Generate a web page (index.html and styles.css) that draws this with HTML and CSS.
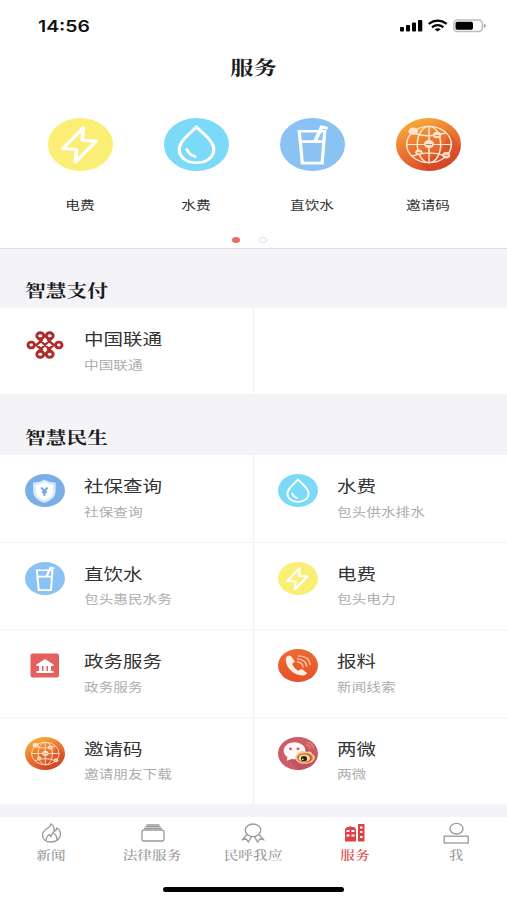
FILE: index.html
```html
<!DOCTYPE html>
<html lang="zh-CN">
<head>
<meta charset="utf-8">
<title>服务</title>
<link rel="stylesheet" href="styles.css">
</head>
<body>
<svg class="defs" aria-hidden="true">
  <defs>
    <linearGradient id="amber" x1=".2" y1="0" x2=".7" y2="1"><stop offset="0" stop-color="#f7b23c"/><stop offset=".5" stop-color="#ea7430"/><stop offset="1" stop-color="#d9432a"/></linearGradient>
    <linearGradient id="orange" x1="0" y1="0" x2="0" y2="1"><stop offset="0" stop-color="#ec6a35"/><stop offset="1" stop-color="#e65326"/></linearGradient>
  </defs>
  <symbol id="bolt" viewBox="0 0 64 64" preserveAspectRatio="none"><circle cx="32" cy="32" r="32" fill="#fbee74"/><path d="M34.500 12L14.500 37L28 38L27 53L47.500 28L34 27Z" fill="none" stroke="#fff" stroke-width="3.800" stroke-linejoin="round"/></symbol>
  <symbol id="drop" viewBox="0 0 64 64" preserveAspectRatio="none"><circle cx="32" cy="32" r="32" fill="#7bdaf8"/><path d="M32 10.500C28 17 15 27 15 38C15 48 23 54 32 54S49 48 49 38C49 27 36 17 32 10.500Z" fill="none" stroke="#fff" stroke-width="3.200" stroke-linejoin="round"/><path d="M22.500 38Q24.500 44.500 30.500 46.500" fill="none" stroke="#fff" stroke-width="3" stroke-linecap="round"/></symbol>
  <symbol id="cup" viewBox="0 0 64 64" preserveAspectRatio="none"><circle cx="32" cy="32" r="32" fill="#8ac3f3"/><path d="M19 16H44L41.500 54.500H22Z M20 28.500H43" fill="none" stroke="#fff" stroke-width="3.200"/><path d="M34.500 28L41 11L47 12.500" fill="none" stroke="#fff" stroke-width="3.600"/></symbol>
  <symbol id="globe" viewBox="0 0 64 64" preserveAspectRatio="none"><circle cx="32" cy="32" r="32" fill="url(#amber)"/><path d="M50 15L64 35C62 51 49 64 32 64L20 52Q51 48 50 15Z" fill="#c43d29" opacity=".25"/><g fill="none" stroke="#ffe8cf" stroke-width="1.500"><circle cx="32.500" cy="32" r="22"/><ellipse cx="32.500" cy="32" rx="11.500" ry="22"/><path d="M10.500 32H54.500M32.500 10V54M16 18Q32 25 49 18M16 46Q32 38 49 46"/></g><g fill="#ffe4cb"><ellipse cx="17" cy="16" rx="4.700" ry="4.400"/><circle cx="40.500" cy="20.500" r="4"/><circle cx="32.500" cy="31.500" r="5"/><circle cx="22.500" cy="41.500" r="3.500"/><circle cx="49.500" cy="45" r="3.800"/></g><path d="M29.500 32H35.500M38.500 21H42.500M20.500 42H24.500M47.500 45H51.500" stroke="#dd7340"/></symbol>
  <symbol id="shield" viewBox="0 0 64 64" preserveAspectRatio="none"><circle cx="32" cy="32" r="32" fill="#79afe6"/><path d="M31 10.500Q38 16 49 16.500V34Q49 49 31 56Q13 49 13 34V16.500Q24 16 31 10.500Z" fill="#d6e8fa"/><path d="M31 16Q37 20 45 20.500V34Q45 45 31 51Q17 45 17 34V20.500Q25 20 31 16Z" fill="#fff"/><path d="M26 26L31 33L36 26M31 32V42M27 35H35" fill="none" stroke="#69a5e0" stroke-width="3.400"/></symbol>
  <symbol id="phone" viewBox="0 0 64 64" preserveAspectRatio="none"><circle cx="32" cy="32" r="32" fill="url(#orange)"/><path d="M17 13Q12 14 12.500 22C13 38 26 51 39 51.500Q46 51 46 46L38 39L32 42Q25 37 22.500 29L27 24L21 14Q19 12 17 13Z" fill="#fff0e7"/><path d="M31 25Q39 26 40 35M31 19Q44 20 46 33M33 13.500Q50 14 51.500 30" fill="none" stroke="#ffc7ad" stroke-width="2.400" stroke-linecap="round"/></symbol>
  <symbol id="social" viewBox="0 0 64 64" preserveAspectRatio="none"><circle cx="32" cy="32" r="32" fill="#cd5c68"/><path d="M44 22L63 36Q60 61 33 64L18 45Z" fill="#ad4657" opacity=".45"/><path d="M26 10C16 10 9 18 9 27Q9 34 15 39L14 46L22 42.500C36 45 44 37 44 27C44 17 36 10 26 10Z" fill="#fff7f7"/><circle cx="20" cy="23" r="2.500" fill="#d1606d"/><circle cx="32" cy="23" r="2.500" fill="#d1606d"/><path d="M28 39C30 29 38 24 44 29C51 26 56 30 54 33Q60 35 59 40C58 48 50 52 42 52C33 52 27 46 28 39Z" fill="#f4ce8e"/><ellipse cx="43" cy="40.500" rx="12.500" ry="9" fill="#d65b32"/><ellipse cx="42" cy="41" rx="9" ry="7" fill="#f7dfad"/><circle cx="41.500" cy="42" r="5" fill="#29231c"/><circle cx="39.500" cy="43" r="1.500" fill="#fff"/><path d="M45 10Q56 11 57 22M45 15Q51 16 52 21" fill="none" stroke="#df9254" stroke-width="2"/></symbol>
</svg>

<main class="screen">
  <header class="status">
    <time class="clock">14:56</time>
    <svg class="signals" viewBox="0 0 88 16">
      <g><rect x="1" y="8" width="4" height="4.500" rx="1"/><rect x="7" y="6" width="4" height="6.500" rx="1"/><rect x="13" y="3.500" width="4" height="9" rx="1"/><rect x="19" y="1" width="4.300" height="11.500" rx="1"/></g>
      <g fill="none" stroke="#000" stroke-width="2.300"><path d="M29.700 4.900Q38.700 -1.500 47.700 4.900M33 8.200Q38.700 4.200 44.400 8.200"/></g><path d="M35.700 10.200Q38.700 8.400 41.700 10.200L38.700 12.600Z"/>
      <rect x="54.800" y="1" width="28.500" height="11.500" rx="3.500" fill="#fff" stroke="#bdbdbd" stroke-width="1.500"/><rect x="56.500" y="2.700" width="17.500" height="8.100" rx="1.700"/><path d="M84.700 5Q87 5.300 87 6.900T84.700 8.700Z" fill="#aaa"/>
    </svg>
  </header>
  <h1 class="page-title"><span class="wide">服务</span></h1>

  <nav class="shortcuts">
    <a class="shortcut"><svg class="shortcut-icon"><use href="#bolt"/></svg><span class="wide">电费</span></a>
    <a class="shortcut"><svg class="shortcut-icon"><use href="#drop"/></svg><span class="wide">水费</span></a>
    <a class="shortcut"><svg class="shortcut-icon"><use href="#cup"/></svg><span class="wide">直饮水</span></a>
    <a class="shortcut"><svg class="shortcut-icon"><use href="#globe"/></svg><span class="wide">邀请码</span></a>
  </nav>
  <div class="pager"><i class="dot active"></i><i class="dot"></i></div>

  <h2 class="section-title first"><span class="wide">智慧支付</span></h2>
  <section class="services">
    <a class="service">
      <svg class="service-icon" viewBox="0 0 40 33"><g fill="none" stroke="#b02c2a" stroke-width="2.900"><ellipse cx="15.300" cy="8.700" rx="3.500" ry="3"/><ellipse cx="24.700" cy="8.700" rx="3.500" ry="3"/><ellipse cx="15.300" cy="27.300" rx="3.500" ry="3"/><ellipse cx="24.700" cy="27.300" rx="3.500" ry="3"/><ellipse cx="6.200" cy="18" rx="3.200" ry="2.900"/><ellipse cx="33.800" cy="18" rx="3.200" ry="2.900"/><path d="M12.800 11L27.200 25M27.200 11L12.800 25M9 18H11.500L17.500 23.500M9 18H11.500L17.500 12.500M31 18H28.500L22.500 23.500M31 18H28.500L22.500 12.500" stroke-width="2.400"/></g></svg>
      <div class="copy"><span class="wide name">中国联通</span><span class="wide detail">中国联通</span></div>
    </a>
    <div class="service"></div>
  </section>

  <h2 class="section-title"><span class="wide">智慧民生</span></h2>
  <section class="services">
    <a class="service"><svg class="service-icon"><use href="#shield"/></svg><div class="copy"><span class="wide name">社保查询</span><span class="wide detail">社保查询</span></div></a>
    <a class="service"><svg class="service-icon"><use href="#drop"/></svg><div class="copy"><span class="wide name">水费</span><span class="wide detail">包头供水排水</span></div></a>
    <a class="service"><svg class="service-icon"><use href="#cup"/></svg><div class="copy"><span class="wide name">直饮水</span><span class="wide detail">包头惠民水务</span></div></a>
    <a class="service"><svg class="service-icon"><use href="#bolt"/></svg><div class="copy"><span class="wide name">电费</span><span class="wide detail">包头电力</span></div></a>
    <a class="service"><svg class="service-icon" viewBox="0 0 40 33"><rect x="5.500" y="4.500" width="28.500" height="24" rx="2" fill="#e4605f"/><path d="M11.500 15.500L20 10L28.500 15.500V17H11.500ZM14 17H17V22.500H14ZM18.500 17H21.500V22.500H18.500ZM23 17H26V22.500H23ZM11.500 22H28.500V24H11.500Z" fill="#fff"/></svg><div class="copy"><span class="wide name">政务服务</span><span class="wide detail">政务服务</span></div></a>
    <a class="service"><svg class="service-icon"><use href="#phone"/></svg><div class="copy"><span class="wide name">报料</span><span class="wide detail">新闻线索</span></div></a>
    <a class="service"><svg class="service-icon"><use href="#globe"/></svg><div class="copy"><span class="wide name">邀请码</span><span class="wide detail">邀请朋友下载</span></div></a>
    <a class="service"><svg class="service-icon"><use href="#social"/></svg><div class="copy"><span class="wide name">两微</span><span class="wide detail">两微</span></div></a>
  </section>

  <footer class="bottom">
    <nav class="tabs">
      <a class="tab"><svg viewBox="0 0 26 22"><path d="M13 2C13 6 4.500 7 4.500 13C4.500 17.500 8 20 13 20S22.500 17 22.500 12Q22.500 8 19 6Q18.500 8.500 16 9.500Q17 4 13 2ZM8 18Q9 13.500 11.500 12.500L13 14.500L15 10.500Q19 13 19 18"/></svg><span class="wide">新闻</span></a>
      <a class="tab"><svg viewBox="0 0 26 22"><path d="M5 8H22Q25 8 25 10V17Q25 19 23 19H5Q3 19 3 17V10Q3 8 5 8ZM5 6.400H23M6.500 4.700H21.500M7.500 3H20.500"/></svg><span class="wide">法律服务</span></a>
      <a class="tab"><svg viewBox="0 0 26 22"><ellipse cx="13" cy="8.300" rx="7.700" ry="6.300"/><path d="M7 12.500L2.500 17.500L6.200 17L8.300 20L11.500 14.700M19 12.500L23.500 17.500L19.800 17L17.700 20L14.500 14.700"/></svg><span class="wide">民呼我应</span></a>
      <a class="tab selected"><svg viewBox="0 0 26 22"><path class="solid" fill-rule="evenodd" d="M3 7L5 5H7L8 4L10 5H12L14 7V19.500H3ZM16 2H22.500V19.500H16ZM4.500 8V10H7.500V8ZM9.500 8V10H12.500V8ZM4.500 12.500V14.500H7.500V12.500ZM9.500 12.500V14.500H12.500V12.500ZM18 4.500V6.500H20.500V4.500ZM18 9V11H20.500V9ZM18 14V16H20.500V14Z"/></svg><span class="wide">服务</span></a>
      <a class="tab"><svg viewBox="0 0 26 22"><ellipse cx="13.500" cy="6.700" rx="6.500" ry="5.300"/><rect x="1.200" y="14.200" width="24" height="6.800"/></svg><span class="wide">我</span></a>
    </nav>
    <div class="home-indicator"></div>
  </footer>
</main>
</body>
</html>
```
FILE: styles.css
```css
* { box-sizing: border-box; }
body {
  margin: 0;
  background: #fff;
  color: #333;
  font-family: "Liberation Sans", "Noto Sans CJK SC", sans-serif;
}
.defs { position: absolute; width: 0; height: 0; }
.screen {
  display: flex;
  flex-direction: column;
  width: 507px;
  height: 900px;
  overflow: hidden;
  background: #f4f4f8;
}
.wide { display: block; transform: scaleX(1.22); white-space: nowrap; }
.status {
  display: flex;
  justify-content: space-between;
  align-items: center;
  height: 52px;
  padding: 0 20px 0 38px;
  background: #fff;
}
.clock {
  color: #111;
  font: 600 16px/20px Inter, sans-serif;
  transform: scaleX(1.21);
  transform-origin: left;
}
.signals { width: 88px; height: 16px; margin-top: 2px; }
.page-title, .section-title {
  margin: 0;
  color: #1c1c1e;
  font-family: "Noto Serif CJK SC", "Noto Sans CJK SC", serif;
  font-weight: 700;
}
.page-title {
  height: 66px;
  padding-top: 1px;
  background: #fff;
  font-size: 19px;
  line-height: 28px;
  text-align: center;
}
.shortcuts {
  display: grid;
  grid-template-columns: repeat(4, 1fr);
  height: 110px;
  padding: 0 21px 0 22px;
  background: #fff;
}
.shortcut {
  display: flex;
  flex-direction: column;
  align-items: center;
  gap: 25px;
  font-size: 12px;
  line-height: 20px;
}
.shortcut-icon { width: 65px; height: 53px; }
.pager {
  display: flex;
  justify-content: center;
  align-items: center;
  gap: 19px;
  height: 21px;
  padding-right: 9px;
  background: #fff;
  border-bottom: 1px solid #dedee2;
}
.dot {
  width: 8px;
  height: 6px;
  margin-top: 4px;
  border: 1px solid #dfdfdf;
  border-radius: 50%;
}
.dot.active { background: #e86e63; border-color: #e86e63; }
.section-title {
  height: 60px;
  padding: 29px 0 0 25px;
  font-size: 17px;
  line-height: 26px;
}
.first { height: 59px; padding-top: 28px; }
.section-title .wide, .copy .wide { transform-origin: left; }
.services {
  display: grid;
  grid-template-columns: 254px 253px;
  background: #fff;
}
.service {
  display: flex;
  height: 87.4px;
  padding: 19px 0 0 24.5px;
  border-bottom: 1px solid #f5f5f7;
}
.service:nth-child(odd) { border-right: 1px solid #f0f0f3; }
.service:nth-child(even) { padding-left: 24px; }
.service-icon { width: 40px; height: 33px; flex: none; }
.copy { padding: 1px 0 0 19px; }
.name { color: #333; font-size: 16px; line-height: 24px; }
.detail { margin-top: 4.5px; color: #adadad; font-size: 12px; line-height: 18px; }
.bottom { height: 83px; margin-top: auto; background: #fff; }
.tabs { display: grid; grid-template-columns: repeat(5, 1fr); height: 70px; }
.tab {
  display: flex;
  flex-direction: column;
  align-items: center;
  padding-top: 5px;
  color: #999;
  font: 500 12px/20px "Noto Serif CJK SC", "Noto Sans CJK SC", serif;
}
.tab svg {
  width: 26px;
  height: 22px;
  margin-bottom: 1px;
  fill: none;
  stroke: currentColor;
  stroke-width: 1.3;
}
.tab .solid { fill: currentColor; stroke: none; }
.selected { color: #df4244; }
.home-indicator { width: 181px; height: 5px; margin: 0 auto; border-radius: 3px; background: #000; }
```
